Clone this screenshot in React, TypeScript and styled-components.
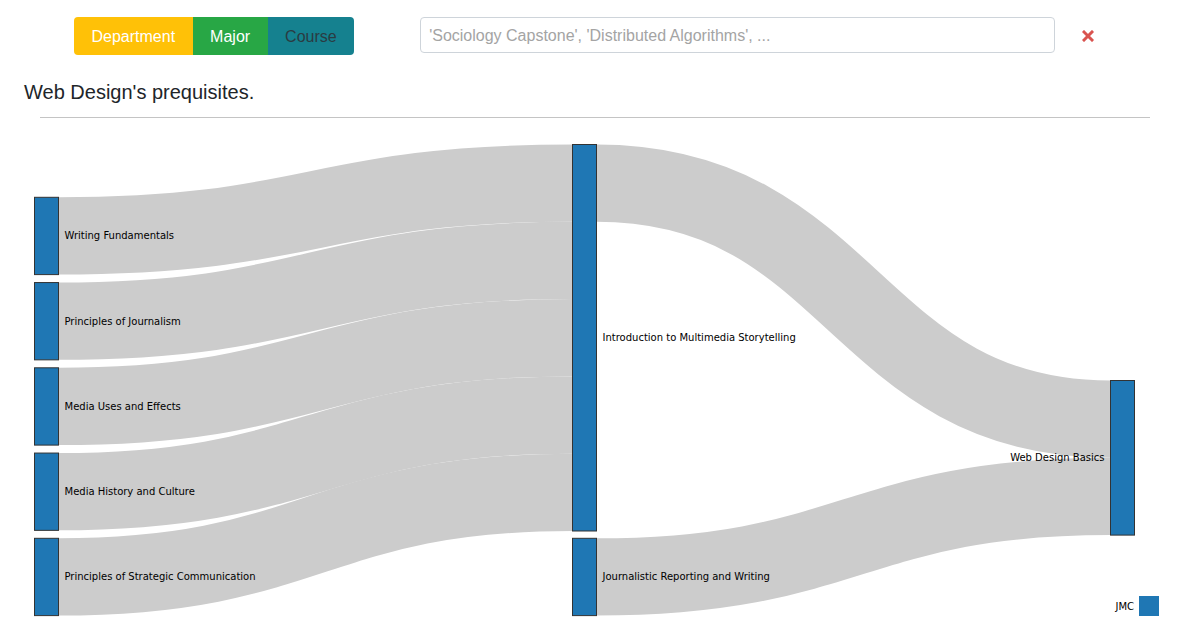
import React from "react";
import styled, { createGlobalStyle } from "styled-components";

const GlobalStyle = createGlobalStyle`
  html, body {
    margin: 0;
    padding: 0;
    background: #ffffff;
    font-family: "Liberation Sans", Arial, sans-serif;
  }
`;

const Page = styled.div`
  width: 1181px;
  height: 643px;
  overflow: hidden;
`;

const TopBar = styled.div`
  display: flex;
  align-items: flex-start;
  padding: 17px 0 0 74px;
  height: 38px;
`;

const ButtonGroup = styled.div`
  display: flex;
  border-radius: 4px;
  overflow: hidden;
  height: 37.5px;
`;

type Variant = "department" | "major" | "course";

const variantStyles: Record<Variant, { bg: string; fg: string }> = {
  department: { bg: "#ffc107", fg: "#ffffff" },
  major: { bg: "#28a745", fg: "#ffffff" },
  course: { bg: "#15818f", fg: "#2a3b42" },
};

const ToggleButton = styled.button<{ $variant: Variant }>`
  display: flex;
  align-items: center;
  justify-content: center;
  border: none;
  margin: 0;
  padding: 2px 17.5px 0;
  height: 37.5px;
  font-family: "Liberation Sans", Arial, sans-serif;
  font-size: 16px;
  background: ${(p) => variantStyles[p.$variant].bg};
  color: ${(p) => variantStyles[p.$variant].fg};
  cursor: pointer;
`;

const SearchInput = styled.input`
  box-sizing: border-box;
  margin-left: 66px;
  width: 635px;
  height: 36px;
  border: 1px solid #ced4da;
  border-radius: 4px;
  padding: 1px 8px 0;
  font-family: "Liberation Sans", Arial, sans-serif;
  font-size: 16px;
  color: #495057;
  outline: none;
  &::placeholder {
    color: #a4a4a4;
  }
`;

const ClearButton = styled.button`
  display: flex;
  align-items: center;
  justify-content: center;
  margin: 13px 0 0 27px;
  padding: 0;
  width: 12px;
  height: 12px;
  border: none;
  background: transparent;
  cursor: pointer;
`;

const Heading = styled.h4`
  margin: 25px 0 0 24px;
  font-family: "Liberation Sans", Arial, sans-serif;
  font-size: 20px;
  line-height: 24px;
  font-weight: normal;
  color: #212529;
`;

const Rule = styled.hr`
  margin: 13px 31px 0 40px;
  height: 1px;
  border: none;
  background: #c4c4c4;
`;

const Chart = styled.svg`
  display: block;
  width: 1181px;
  height: 525px;
`;

const NodeLabel = styled.text`
  font-family: "DejaVu Sans", Verdana, sans-serif;
  font-size: 10px;
  fill: #000000;
`;

const LinkPath = styled.path`
  fill: none;
  stroke: #cccccc;
`;

const NodeRect = styled.rect`
  fill: #1f77b4;
  stroke: #333333;
  stroke-width: 1;
`;

type Node = { id: string; name: string; x: number; y: number; h: number; labelLeft?: boolean };

const NW = 24;
const D = 77.3;
const leftY = (i: number) => 197.3 + i * 85.25;

const nodes: Node[] = [
  { id: "wf", name: "Writing Fundamentals", x: 34.5, y: leftY(0), h: D },
  { id: "poj", name: "Principles of Journalism", x: 34.5, y: leftY(1), h: D },
  { id: "mu", name: "Media Uses and Effects", x: 34.5, y: leftY(2), h: D },
  { id: "mh", name: "Media History and Culture", x: 34.5, y: leftY(3), h: D },
  { id: "sc", name: "Principles of Strategic Communication", x: 34.5, y: leftY(4), h: D },
  { id: "intro", name: "Introduction to Multimedia Storytelling", x: 572.5, y: 144.5, h: D * 5 },
  { id: "jrw", name: "Journalistic Reporting and Writing", x: 572.5, y: leftY(4), h: D },
  { id: "wdb", name: "Web Design Basics", x: 1110.5, y: 380.5, h: D * 2, labelLeft: true },
];

type Link = { x0: number; y0: number; x1: number; y1: number };

const links: Link[] = [
  ...[0, 1, 2, 3, 4].map((i) => ({
    x0: 34.5 + NW,
    y0: leftY(i) + D / 2,
    x1: 572.5,
    y1: 144.5 + i * D + D / 2,
  })),
  { x0: 572.5 + NW, y0: 144.5 + D / 2, x1: 1110.5, y1: 380.5 + D / 2 },
  { x0: 572.5 + NW, y0: leftY(4) + D / 2, x1: 1110.5, y1: 380.5 + D + D / 2 },
];

const linkPath = (l: Link) => {
  const xm = (l.x0 + l.x1) / 2;
  return `M${l.x0},${l.y0}C${xm},${l.y0} ${xm},${l.y1} ${l.x1},${l.y1}`;
};

const CloseIcon = () => (
  <svg width="12" height="12" viewBox="0 0 12 12">
    <path d="M2 2 L10 10 M10 2 L2 10" stroke="#d9534f" strokeWidth="3" strokeLinecap="square" />
  </svg>
);

export default function App() {
  const offset = 118;
  return (
    <Page>
      <GlobalStyle />
      <TopBar>
        <ButtonGroup>
          <ToggleButton $variant="department">Department</ToggleButton>
          <ToggleButton $variant="major">Major</ToggleButton>
          <ToggleButton $variant="course">Course</ToggleButton>
        </ButtonGroup>
        <SearchInput placeholder="'Sociology Capstone', 'Distributed Algorithms', ..." />
        <ClearButton aria-label="clear">
          <CloseIcon />
        </ClearButton>
      </TopBar>
      <Heading>Web Design's prequisites.</Heading>
      <Rule />
      <Chart viewBox={`0 ${offset} 1181 525`}>
        <g>
          {links.map((l, i) => (
            <LinkPath key={i} d={linkPath(l)} strokeWidth={D} />
          ))}
        </g>
        <g>
          {nodes.map((n) => (
            <g key={n.id}>
              <NodeRect x={n.x} y={n.y} width={NW} height={n.h} />
              <NodeLabel
                x={n.labelLeft ? n.x - 6 : n.x + NW + 6}
                y={n.y + n.h / 2}
                dy="0.35em"
                textAnchor={n.labelLeft ? "end" : "start"}
              >
                {n.name}
              </NodeLabel>
            </g>
          ))}
        </g>
        <g>
          <NodeLabel x={1134} y={606.5} dy="0.35em" textAnchor="end">
            JMC
          </NodeLabel>
          <rect x={1139} y={596} width={20} height={20} fill="#1f77b4" />
        </g>
      </Chart>
    </Page>
  );
}
